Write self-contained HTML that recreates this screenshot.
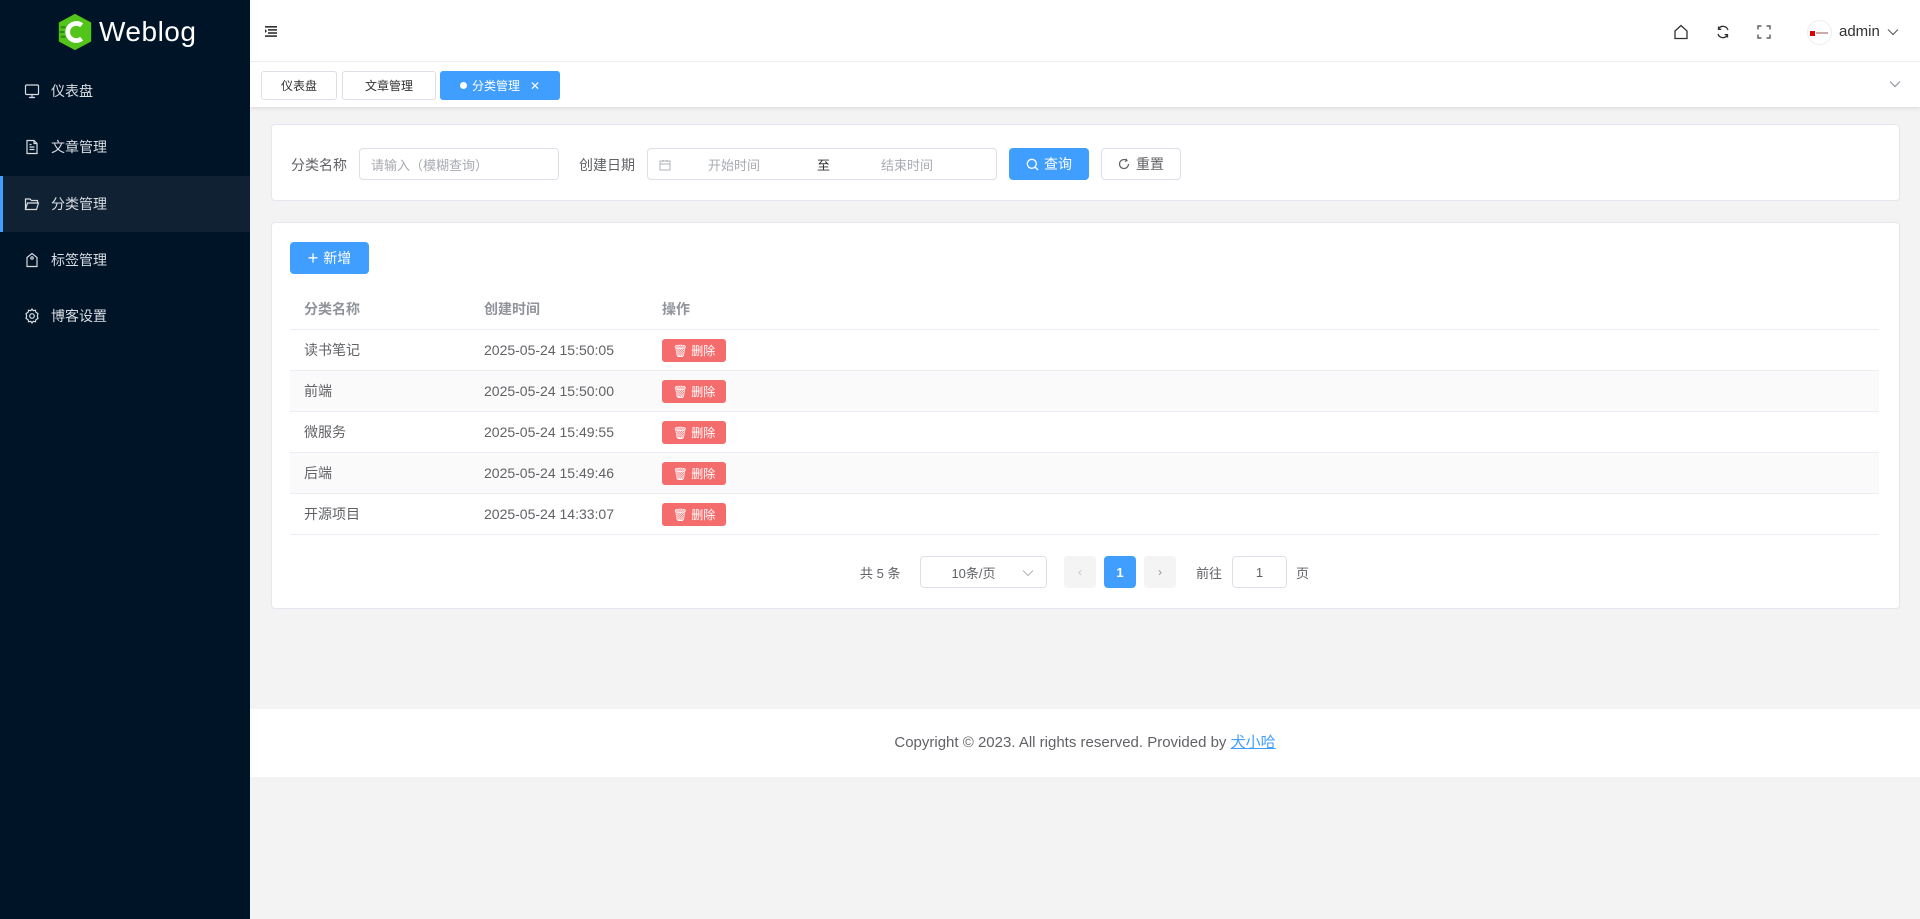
<!DOCTYPE html>
<html><head><meta charset="utf-8"><style>
*{box-sizing:border-box;margin:0;padding:0}
body{width:1920px;height:919px;overflow:hidden;background:#f3f3f4;font-family:"Liberation Sans","Noto Sans CJK SC",sans-serif;font-size:14px;color:#606266;position:relative}
.abs{position:absolute}
.side{left:0;top:0;width:250px;height:919px;background:#001428}
.logo{left:55px;top:12px;display:flex;align-items:center;color:#fff;font-size:28px;letter-spacing:0.5px}
.mi{left:0;width:250px;height:56px;display:flex;align-items:center;padding-left:24px;color:#d9dde3;font-size:14px}
.mi svg{margin-right:11px}
.mi.act{background:#0f2133;border-left:3px solid #409eff;padding-left:21px}
.hdr{left:250px;top:0;width:1670px;height:62px;background:#fff;border-bottom:1px solid #eee}
.tabs{left:250px;top:62px;width:1670px;height:45px;background:#fff;box-shadow:0 2px 3px rgba(0,0,0,.08)}
.tab{top:9px;height:29px;border:1px solid #dcdfe6;border-radius:3px;background:#fff;color:#303133;font-size:12px;display:flex;align-items:center;justify-content:center}
.card{background:#fff;border:1px solid #e4e7ed;border-radius:4px}
.inp{border:1px solid #dcdfe6;border-radius:4px;height:32px;background:#fff;color:#a8abb2;display:flex;align-items:center;font-size:13px}
.btn{height:32px;border-radius:4px;display:flex;align-items:center;justify-content:center;font-size:14px}
.row{left:290px;width:1589px;height:41px;border-bottom:1px solid #ebeef5;display:flex;align-items:center}
.row span{position:absolute}
.del{left:372px;width:64px;height:23px;background:#f56c6c;border-radius:3px;color:#fff;font-size:12px;display:flex;align-items:center;justify-content:center}
</style></head><body>
<div class="abs side"></div>
<div class="abs logo">
<svg width="40" height="40" viewBox="0 0 42 42"><polygon points="21,2 38,11 38,31 21,40 4,31 4,11" fill="#52c41a"/><path d="M28 14 A9 9 0 1 0 28 28" stroke="#fff" stroke-width="5" fill="none"/><path d="M6 16h5M5 21h5M6 26h5" stroke="#2f8a12" stroke-width="2"/></svg>
<span style="margin-left:4px">Weblog</span></div>
<div class="abs mi" style="top:63px"><svg width="16" height="16" viewBox="0 0 16 16" fill="none" stroke="#d9dde3" stroke-width="1.2"><rect x="1.5" y="2" width="13" height="9.5" rx="1"/><path d="M8 11.5v3M5 14.5h6"/></svg>仪表盘</div>
<div class="abs mi" style="top:119px"><svg width="16" height="16" viewBox="0 0 16 16" fill="none" stroke="#d9dde3" stroke-width="1.2"><path d="M3 1.5h7l3 3v10H3z M10 1.5v3h3 M5.5 8h5M5.5 10.5h5M5.5 5.5h2"/></svg>文章管理</div>
<div class="abs mi act" style="top:176px"><svg width="16" height="16" viewBox="0 0 16 16" fill="none" stroke="#d9dde3" stroke-width="1.2"><path d="M1.5 13.5V3h4.5l1.5 1.5h6V7 M1.5 13.5l2-6.5h11l-2 6.5z"/></svg>分类管理</div>
<div class="abs mi" style="top:232px"><svg width="16" height="16" viewBox="0 0 16 16" fill="none" stroke="#d9dde3" stroke-width="1.2"><path d="M3 5.5L8 1.5l5 4v9H3z"/><circle cx="8" cy="6" r="1.2"/></svg>标签管理</div>
<div class="abs mi" style="top:288px"><svg width="16" height="16" viewBox="0 0 16 16" fill="none" stroke="#d9dde3" stroke-width="1.2"><circle cx="8" cy="8" r="2.3"/><path d="M8 1l1.3 1.7 2.1-.5.5 2.1L14 5.6 13.3 8 14 10.4l-2.1 1.3-.5 2.1-2.1-.5L8 15l-1.3-1.7-2.1.5-.5-2.1L2 10.4 2.7 8 2 5.6l2.1-1.3.5-2.1 2.1.5z"/></svg>博客设置</div>

<div class="abs hdr"></div>
<svg class="abs" style="left:265px;top:26px" width="12" height="11" viewBox="0 0 12 11" fill="#303133"><rect x="0" y="0" width="12" height="1.6"/><rect x="3" y="3.1" width="9" height="1.6"/><rect x="3" y="6.2" width="9" height="1.6"/><rect x="0" y="9.3" width="12" height="1.6"/><path d="M0 3l2 2-2 2z"/></svg>
<svg class="abs" style="left:1673px;top:24px" width="16" height="16" viewBox="0 0 16 16" fill="none" stroke="#303133" stroke-width="1.3"><path d="M2 7L8 1.5 14 7v7.5H2z"/></svg>
<svg class="abs" style="left:1716px;top:25px" width="14" height="14" viewBox="0 0 14 14" fill="none" stroke="#303133" stroke-width="1.3"><path d="M12 5A5.2 5.2 0 0 0 2.5 4M2 9a5.2 5.2 0 0 0 9.5 1"/><path d="M2.5 1.5v2.8h2.8M11.5 12.5V9.7H8.7"/></svg>
<svg class="abs" style="left:1757px;top:25px" width="14" height="14" viewBox="0 0 14 14" fill="none" stroke="#606266" stroke-width="1.5"><path d="M1 4.5V1h3.5M9.5 1H13v3.5M13 9.5V13H9.5M4.5 13H1V9.5"/></svg>
<div class="abs" style="left:1807px;top:20px;width:25px;height:25px;border-radius:50%;border:1px solid #eee;background:#fff"><div style="position:absolute;left:2px;top:10px;width:5px;height:5px;background:#d00"></div><div style="position:absolute;left:8px;top:11px;width:12px;height:2px;background:#caa"></div></div>
<div class="abs" style="left:1839px;top:23px;font-size:15px;color:#303133">admin</div>
<svg class="abs" style="left:1887px;top:28px" width="12" height="8" viewBox="0 0 12 8" fill="none" stroke="#606266" stroke-width="1.2"><path d="M1 1.5l5 5 5-5"/></svg>

<div class="abs tabs"></div>
<div class="abs tab" style="left:261px;top:71px;width:76px">仪表盘</div>
<div class="abs tab" style="left:342px;top:71px;width:94px">文章管理</div>
<div class="abs tab" style="left:440px;top:71px;width:120px;background:#409eff;border-color:#409eff;color:#fff"><span style="display:inline-block;width:7px;height:7px;border-radius:50%;background:#fff;margin-right:5px"></span>分类管理<span style="margin-left:10px;font-size:12px">✕</span></div>
<svg class="abs" style="left:1889px;top:80px" width="12" height="8" viewBox="0 0 12 8" fill="none" stroke="#909399" stroke-width="1.2"><path d="M1 1.5l5 5 5-5"/></svg>

<div class="abs card" style="left:271px;top:124px;width:1629px;height:77px"></div>
<div class="abs" style="left:291px;top:155px;color:#606266">分类名称</div>
<div class="abs inp" style="left:359px;top:148px;width:200px;padding-left:11px">请输入（模糊查询）</div>
<div class="abs" style="left:579px;top:155px;color:#606266">创建日期</div>
<div class="abs inp" style="left:647px;top:148px;width:350px">
<svg style="position:absolute;left:11px;top:10px" width="12" height="12" viewBox="0 0 12 12" fill="none" stroke="#b0b3b8" stroke-width="1"><rect x="1" y="2" width="10" height="9"/><path d="M1 5h10M4 1v2M8 1v2"/></svg>
<span style="position:absolute;left:60px">开始时间</span><span style="position:absolute;left:169px;color:#303133">至</span><span style="position:absolute;left:233px">结束时间</span></div>
<div class="abs btn" style="left:1009px;top:148px;width:80px;background:#409eff;color:#fff"><svg width="13" height="13" viewBox="0 0 13 13" fill="none" stroke="#fff" stroke-width="1.3" style="margin-right:5px"><circle cx="5.8" cy="5.8" r="4.5"/><path d="M9.2 9.2l2.8 2.8"/></svg>查询</div>
<div class="abs btn" style="left:1101px;top:148px;width:80px;border:1px solid #dcdfe6;color:#606266;background:#fff"><svg width="12" height="12" viewBox="0 0 12 12" fill="none" stroke="#606266" stroke-width="1.2" style="margin-right:6px"><path d="M10.5 6A4.5 4.5 0 1 1 8.5 2.3"/><path d="M8 0.8l1 1.8-1.9.9"/></svg>重置</div>

<div class="abs card" style="left:271px;top:222px;width:1629px;height:387px"></div>
<div class="abs btn" style="left:290px;top:242px;width:79px;background:#409eff;color:#fff"><span style="font-size:18px;margin-right:5px;font-weight:300">+</span>新增</div>
<div class="abs row" style="top:288px;height:42px;color:#909399;font-weight:bold"><span style="left:14px">分类名称</span><span style="left:194px">创建时间</span><span style="left:372px">操作</span></div>
<div class="abs row" style="top:330px"><span style="left:14px">读书笔记</span><span style="left:194px">2025-05-24 15:50:05</span><span class="del">🗑 删除</span></div>
<div class="abs row" style="top:371px;background:#fafafa"><span style="left:14px">前端</span><span style="left:194px">2025-05-24 15:50:00</span><span class="del">🗑 删除</span></div>
<div class="abs row" style="top:412px"><span style="left:14px">微服务</span><span style="left:194px">2025-05-24 15:49:55</span><span class="del">🗑 删除</span></div>
<div class="abs row" style="top:453px;background:#fafafa"><span style="left:14px">后端</span><span style="left:194px">2025-05-24 15:49:46</span><span class="del">🗑 删除</span></div>
<div class="abs row" style="top:494px"><span style="left:14px">开源项目</span><span style="left:194px">2025-05-24 14:33:07</span><span class="del">🗑 删除</span></div>

<div class="abs" style="left:860px;top:563px;font-size:13px">共 5 条</div>
<div class="abs inp" style="left:920px;top:556px;width:127px;color:#606266;justify-content:center;padding-right:20px">10条/页<svg style="position:absolute;right:12px;top:12px" width="12" height="8" viewBox="0 0 12 8" fill="none" stroke="#b0b3b8" stroke-width="1.1"><path d="M1 1.5l5 5 5-5"/></svg></div>
<div class="abs btn" style="left:1064px;top:556px;width:32px;background:#f4f4f5;color:#c0c4cc;font-size:12px">‹</div>
<div class="abs btn" style="left:1104px;top:556px;width:32px;background:#409eff;color:#fff;font-weight:bold;font-size:13px">1</div>
<div class="abs btn" style="left:1144px;top:556px;width:32px;background:#f4f4f5;color:#909399;font-size:12px">›</div>
<div class="abs" style="left:1196px;top:563px;font-size:13px">前往</div>
<div class="abs inp" style="left:1232px;top:556px;width:55px;justify-content:center;color:#606266">1</div>
<div class="abs" style="left:1296px;top:563px;font-size:13px">页</div>

<div class="abs" style="left:250px;top:709px;width:1670px;height:68px;background:#fff;text-align:center;line-height:68px;font-size:15px;color:#606266">Copyright © 2023. All rights reserved. Provided by <span style="color:#409eff;text-decoration:underline">犬小哈</span></div>
</body></html>
